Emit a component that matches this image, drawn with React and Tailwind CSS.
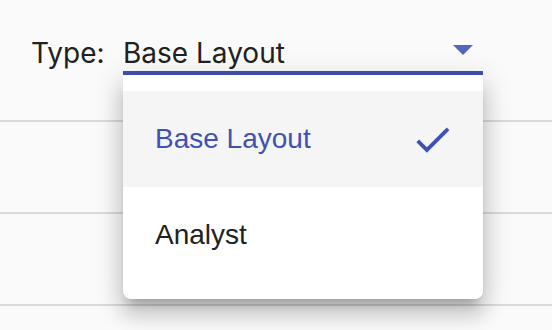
import { useState } from "react";

const options = ["Base Layout", "Analyst"];

function Check() {
  return (
    <svg viewBox="0 0 24 24" className="w-[45px] h-[45px]" fill="#3f51b5">
      <path d="M9 16.17L4.83 12l-1.42 1.41L9 19 21 7l-1.41-1.41z" />
    </svg>
  );
}

export default function App() {
  const [value, setValue] = useState("Base Layout");

  return (
    <div className="relative w-[552px] h-[330px] overflow-hidden bg-[#fafafa] font-['Liberation_Sans',Arial,sans-serif]">
      <div className="h-[122px] pt-[36px] pl-[31px] flex items-start border-b-2 border-[#dadada] font-['Inter',sans-serif] text-[28px] text-[#212121]">
        <span className="leading-[34px] w-[92px]">Type:</span>
        <div className="relative w-[360px] h-[39px] border-b-4 border-[#3f51b5]">
          <span className="block leading-[34px]">{value}</span>
          <svg
            viewBox="0 0 20 10"
            className="absolute right-[10px] top-[9px] w-[20px] h-[10px]"
            fill="#5563c1"
          >
            <path d="M0 0h20L10 10z" />
          </svg>
        </div>
      </div>
      <div className="h-[92px] border-b-2 border-[#dadada]" />
      <div className="h-[92px] border-b-2 border-[#dadada]" />

      <div className="absolute left-[123px] top-[75px] w-[360px] py-[16px] bg-white rounded-b-lg shadow-[0_10px_10px_-6px_rgba(0,0,0,0.2),0_16px_20px_2px_rgba(0,0,0,0.14),0_6px_28px_4px_rgba(0,0,0,0.12)]">
        {options.map((o) => (
          <div
            key={o}
            onClick={() => setValue(o)}
            className={
              "h-[96px] flex items-center justify-between pl-[32px] pr-[28px] text-[28px] " +
              (o === value ? "bg-[#f5f5f5] text-[#3f51b5]" : "text-[#212121]")
            }
          >
            <span>{o}</span>
            {o === value && <Check />}
          </div>
        ))}
      </div>
    </div>
  );
}
